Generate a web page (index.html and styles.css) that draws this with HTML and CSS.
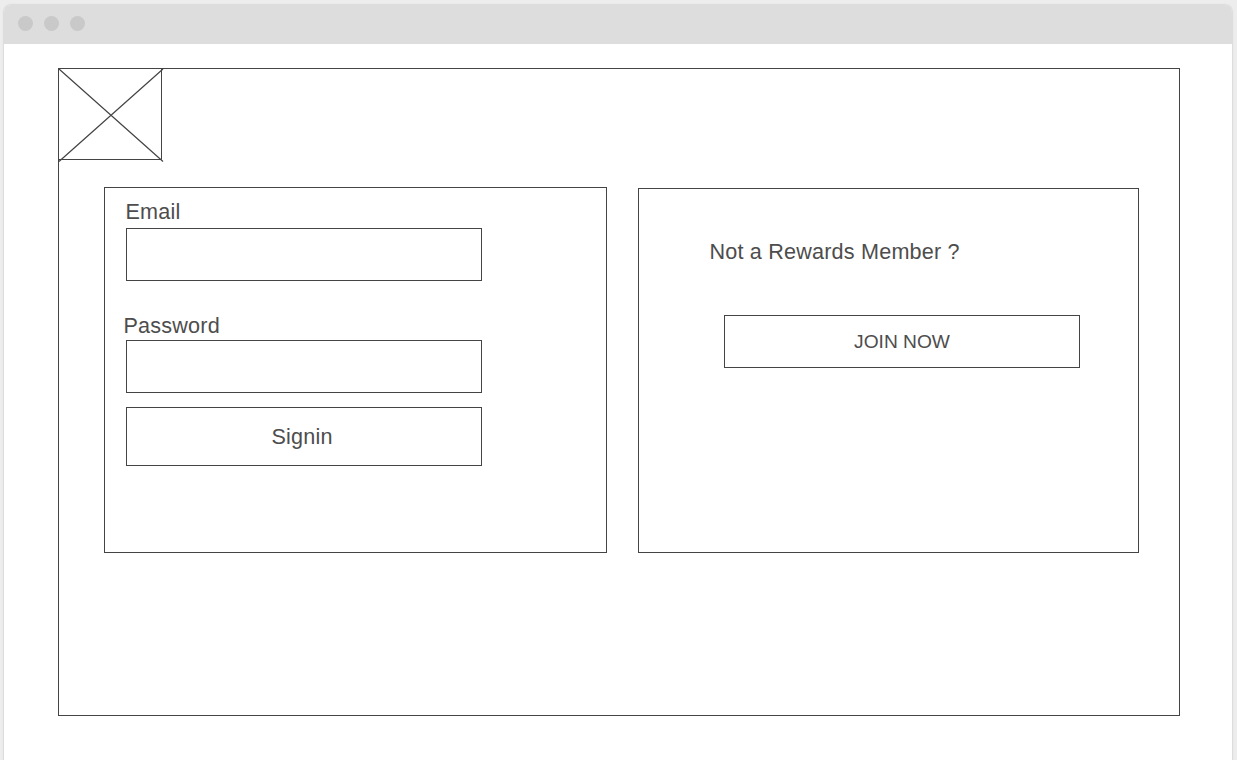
FILE: index.html
```html
<!DOCTYPE html>
<html lang="en">
<head>
<meta charset="utf-8">
<title>Sign in</title>
<link rel="stylesheet" href="styles.css">
</head>
<body>
<div class="window">
  <header class="titlebar">
    <span class="dot"></span><span class="dot"></span><span class="dot"></span>
  </header>
  <main class="page">
    <svg class="logo" width="106" height="95" viewBox="0 0 106 95" fill="none" stroke="#444" stroke-width="1.2">
      <path stroke-width="1" d="M.5 .5H103.5V91.5H.5Z"/>
      <path d="M1 1L105 93.5M105 1L1 93.5"/>
    </svg>
    <div class="panels">
      <form class="panel signin">
        <label class="label" for="email">Email</label>
        <input class="field" id="email" type="email">
        <label class="label label-password" for="password">Password</label>
        <input class="field" id="password" type="password">
        <button class="button signin-button" type="button">Signin</button>
      </form>
      <section class="panel join">
        <p class="question">Not a Rewards Member ?</p>
        <button class="button join-button" type="button">JOIN NOW</button>
      </section>
    </div>
  </main>
</div>
</body>
</html>
```

FILE: styles.css
```css
* { box-sizing: border-box; }
body {
  margin: 0;
  height: 760px;
  overflow: hidden;
  padding: 5px 5px 0 4px;
  background: #ededed;
  font: 21.6px/24px "Liberation Sans", Arial, sans-serif;
  letter-spacing: 0.2px;
  color: #4d4d4d;
}
.window {
  height: 780px;
  background: #fff;
  border-radius: 7px 7px 0 0;
  box-shadow: 0 0 2px rgba(0, 0, 0, 0.25);
}
.titlebar {
  display: flex;
  gap: 11.4px;
  height: 39px;
  padding: 11px 13.6px;
  background: #ddd;
  border-radius: 7px 7px 0 0;
}
.dot {
  width: 15px;
  height: 15px;
  border-radius: 50%;
  background: #c9c9c9;
}
.page {
  width: 1122px;
  height: 648px;
  margin: 24px 0 0 54px;
  border: 1px solid #444;
}
.logo {
  display: block;
  margin: -1px 0 0 -1px;
}
.panels {
  display: flex;
  align-items: flex-end;
  gap: 31px;
  margin: 24px 0 0 45px;
}
.panel {
  display: flex;
  flex-direction: column;
  border: 1px solid #444;
}
.signin {
  width: 503px;
  height: 366px;
  padding: 12px 0 0 21px;
}
.join {
  width: 501px;
  height: 365px;
  padding: 51px 0 0 70px;
}
.label { height: 28px; margin-left: -0.5px; }
.label-password {
  height: 26px;
  margin: 33px 0 0 -2.5px;
}
.field, .button {
  width: 356px;
  height: 53px;
  margin: 0;
  padding: 0;
  border: 1px solid #444;
  border-radius: 0;
  background: #fff;
  color: inherit;
  font: inherit;
  letter-spacing: inherit;
}
.signin-button {
  height: 59px;
  margin-top: 14px;
  padding-right: 4px;
}
.question { margin: 0 0 0 0.4px; }
.join-button {
  margin: 51px 0 0 15px;
  font-size: 19.2px;
  letter-spacing: 0;
}
```
